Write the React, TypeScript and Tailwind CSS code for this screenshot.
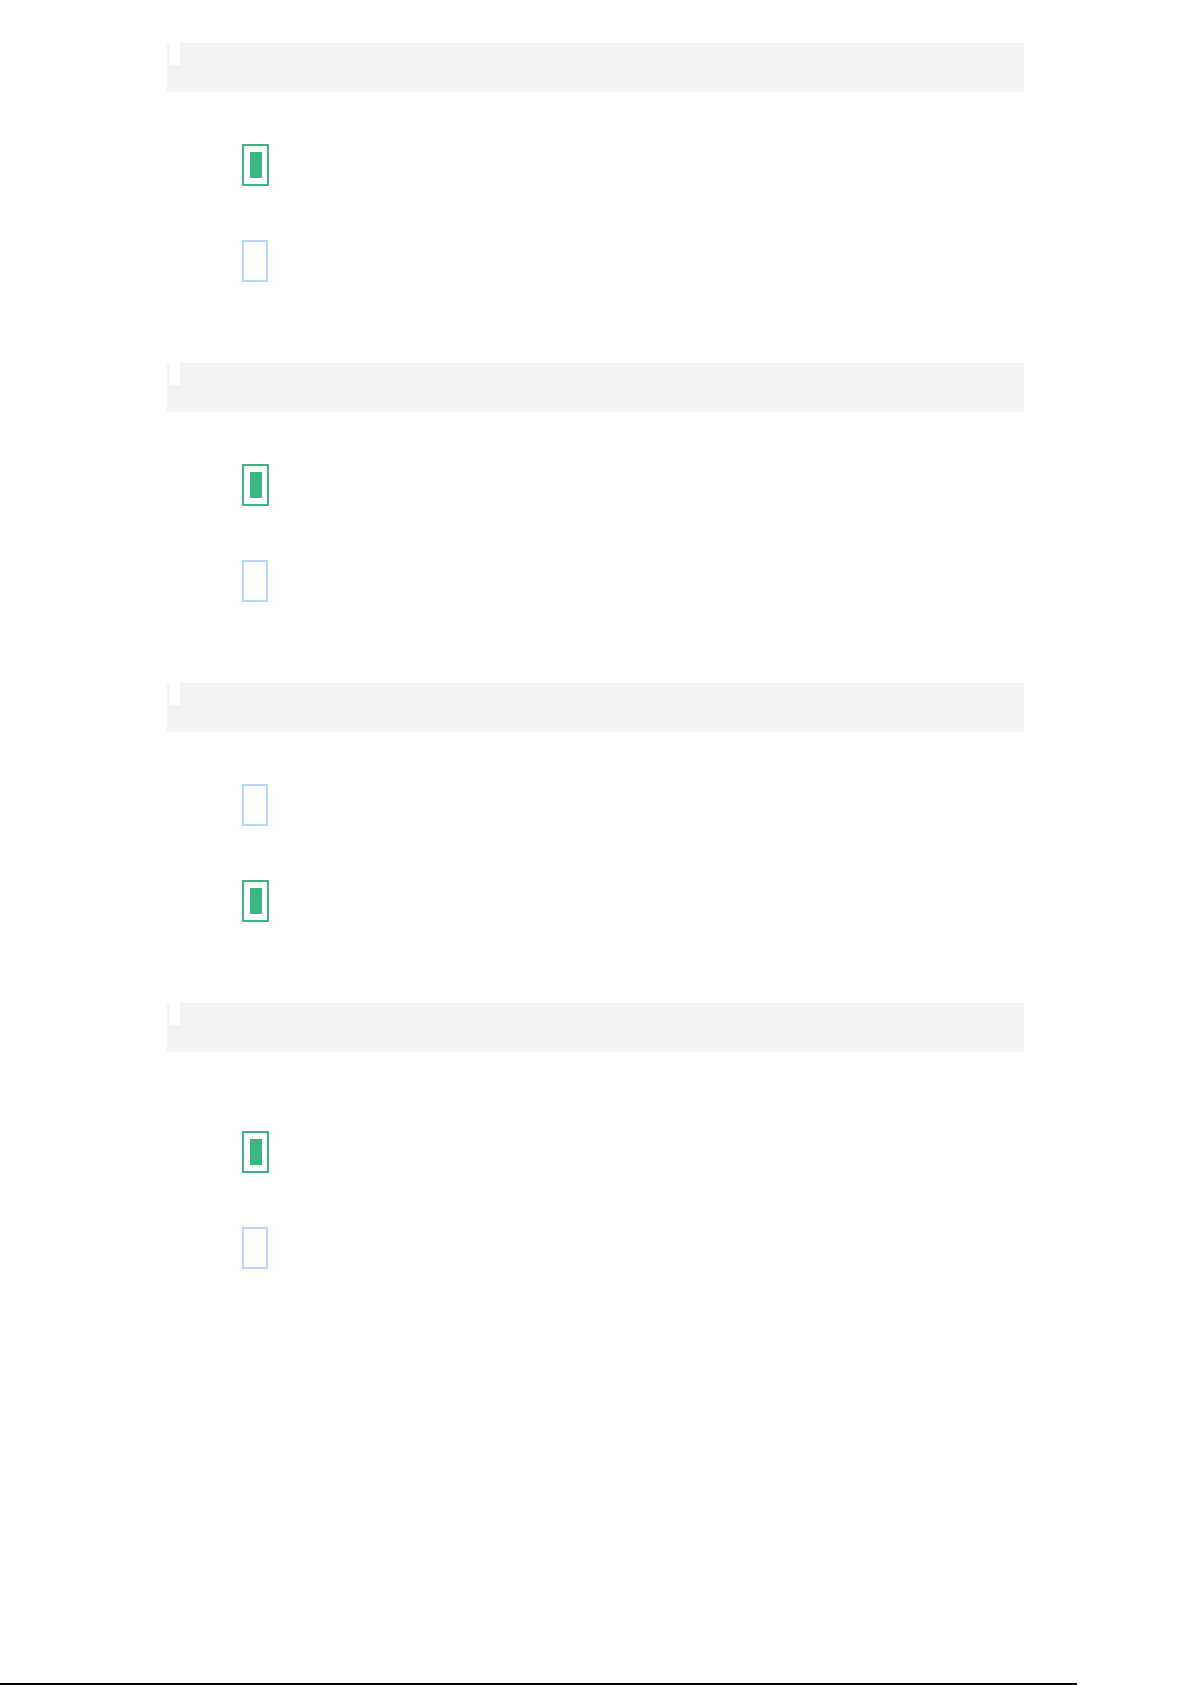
import React from "react";

type Row = "checked" | "empty";

function Checkbox({ kind }: { kind: Row }) {
  if (kind === "checked") {
    return (
      <div className="w-[27px] h-[42px] border-2 border-[#3ab67f] flex items-center justify-center bg-white">
        <div className="w-[12px] h-[26px] bg-[#3ab67f]" />
      </div>
    );
  }
  return <div className="w-[26px] h-[42px] border-2 border-[#b9d6fe] bg-white" />;
}

function Section({ rows, extraTop = false, last = false }: { rows: Row[]; extraTop?: boolean; last?: boolean }) {
  return (
    <div className={last ? "" : "mb-[81px]"}>
      <div className="h-[49px] w-[857px] bg-[#f3f4f6] pl-[3px]">
        <div className="w-[10px] h-[22px] bg-white" />
      </div>
      <div className={extraTop ? "pt-[79px] pl-[75px]" : "pt-[52px] pl-[75px]"}>
        <Checkbox kind={rows[0]} />
        <div className="mt-[54px]">
          <Checkbox kind={rows[1]} />
        </div>
      </div>
    </div>
  );
}

export default function App() {
  return (
    <div className="h-[1685px] w-[1192px] bg-white flex flex-col overflow-hidden" style={{ fontFamily: "'Liberation Sans', sans-serif" }}>
      <div className="pt-[43px] pl-[167px]">
        <Section rows={["checked", "empty"]} />
        <Section rows={["checked", "empty"]} />
        <Section rows={["empty", "checked"]} />
        <Section rows={["checked", "empty"]} extraTop last />
      </div>
      <div className="mt-auto h-[2px] w-[1077px] bg-black" />
    </div>
  );
}
